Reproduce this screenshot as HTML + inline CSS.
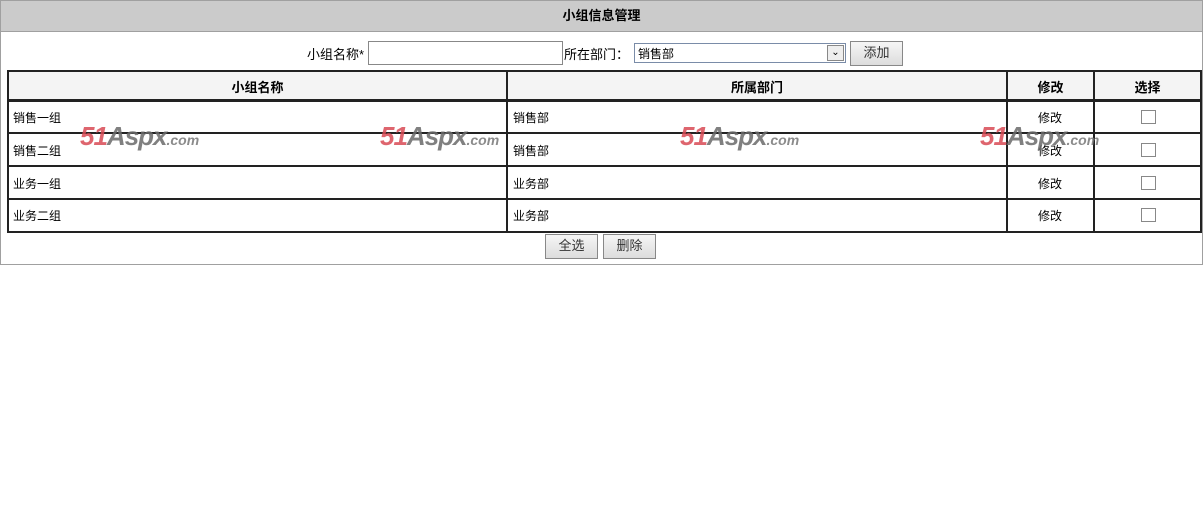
<!DOCTYPE html>
<html><head><meta charset="utf-8"><style>
*{margin:0;padding:0;box-sizing:border-box}
body{width:1203px;height:510px;background:#fff;font-family:"Liberation Sans","Noto Sans CJK SC",sans-serif;font-size:12px;color:#000;position:relative;overflow:hidden}
.box{position:absolute;left:0;top:0;width:1203px;height:265px;border:1px solid #a0a0a0}
.hd{position:absolute;left:0;top:0;width:1203px;height:32px;background:#cbcbcb;border:1px solid #a0a0a0;text-align:center;line-height:29px;font-weight:bold;font-size:13px}
.a{position:absolute}
.inp{border:1px solid #888;background:#fff}
.btn{position:absolute;border:1px solid #888;background:linear-gradient(#f6f6f6,#dcdcdc);text-align:center;font-size:13px;color:#333}
.hl,.vl{position:absolute;background:#222}
.t{position:absolute;font-size:12px}
.th{position:absolute;font-weight:bold;font-size:13px;text-align:center}
.cb{position:absolute;width:15px;height:14px;border:1px solid #888;background:#fff}
.wm{position:absolute;font-style:italic;font-weight:bold;font-size:26px;letter-spacing:-1px;font-family:"Liberation Sans",sans-serif;opacity:.85}
.wm b{color:#d94b55}.wm i{color:#6b6b6b;font-style:italic}.wm s{text-decoration:none;font-size:14px;color:#777;font-weight:bold;letter-spacing:0}
</style></head><body>
<div class="box"></div>
<div class="hd">小组信息管理</div>
<div class="t" style="left:307px;top:44px;font-size:13px">小组名称*</div>
<div class="a inp" style="left:368px;top:41px;width:195px;height:24px"></div>
<div class="t" style="left:564px;top:44px;font-size:13px">所在部门：</div>
<div class="a inp" style="left:634px;top:43px;width:212px;height:20px;border-color:#7a8ca8"><span style="position:absolute;left:3px;top:1px;font-size:12px">销售部</span><span style="position:absolute;right:1px;top:1px;width:17px;height:16px;border:1px solid #888;background:#eee;font-size:10px;text-align:center;line-height:14px">&#8964;</span></div>
<div class="btn" style="left:850px;top:41px;width:53px;height:25px;line-height:22px">添加</div>
<div style="position:absolute;left:7px;top:70px;width:1195px;height:30px;background:#f4f4f4"></div>
<div class="hl" style="left:7px;top:70px;width:1195px;height:2px"></div>
<div class="hl" style="left:7px;top:99px;width:1195px;height:3px"></div>
<div class="hl" style="left:7px;top:132px;width:1195px;height:2px"></div>
<div class="hl" style="left:7px;top:165px;width:1195px;height:2px"></div>
<div class="hl" style="left:7px;top:198px;width:1195px;height:2px"></div>
<div class="hl" style="left:7px;top:231px;width:1195px;height:2px"></div>
<div class="vl" style="left:7px;top:70px;width:2px;height:163px"></div>
<div class="vl" style="left:506px;top:70px;width:2px;height:163px"></div>
<div class="vl" style="left:1006px;top:70px;width:2px;height:163px"></div>
<div class="vl" style="left:1093px;top:70px;width:2px;height:163px"></div>
<div class="vl" style="left:1200px;top:70px;width:2px;height:163px"></div>
<div class="th" style="left:9px;top:77px;width:497px">小组名称</div>
<div class="th" style="left:508px;top:77px;width:498px">所属部门</div>
<div class="th" style="left:1008px;top:77px;width:85px">修改</div>
<div class="th" style="left:1095px;top:77px;width:105px">选择</div>
<div class="t" style="left:13px;top:109px">销售一组</div><div class="t" style="left:513px;top:109px">销售部</div><div class="t" style="left:1038px;top:109px">修改</div><div class="cb" style="left:1141px;top:110px"></div>
<div class="t" style="left:13px;top:142px">销售二组</div><div class="t" style="left:513px;top:142px">销售部</div><div class="t" style="left:1038px;top:142px">修改</div><div class="cb" style="left:1141px;top:143px"></div>
<div class="t" style="left:13px;top:175px">业务一组</div><div class="t" style="left:513px;top:175px">业务部</div><div class="t" style="left:1038px;top:175px">修改</div><div class="cb" style="left:1141px;top:176px"></div>
<div class="t" style="left:13px;top:207px">业务二组</div><div class="t" style="left:513px;top:207px">业务部</div><div class="t" style="left:1038px;top:207px">修改</div><div class="cb" style="left:1141px;top:208px"></div>
<div class="wm" style="left:80px;top:121px"><b>51</b><i>Aspx</i><s>.com</s></div>
<div class="wm" style="left:380px;top:121px"><b>51</b><i>Aspx</i><s>.com</s></div>
<div class="wm" style="left:680px;top:121px"><b>51</b><i>Aspx</i><s>.com</s></div>
<div class="wm" style="left:980px;top:121px"><b>51</b><i>Aspx</i><s>.com</s></div>
<div class="btn" style="left:545px;top:234px;width:53px;height:25px;line-height:22px">全选</div>
<div class="btn" style="left:603px;top:234px;width:53px;height:25px;line-height:22px">删除</div>
</body></html>
